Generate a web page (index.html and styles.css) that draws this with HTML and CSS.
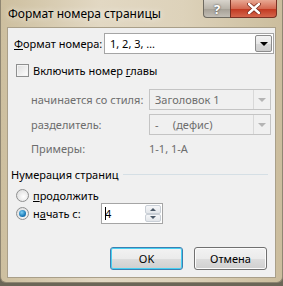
FILE: index.html
```html
<!DOCTYPE html>
<html>
    <head>
        <meta charset="UTF-8">
        <title>Формат номера страницы</title>
        <link rel="stylesheet" href="styles.css">
    </head>
    <body>
        <div class="window">
            <div class="titlebar">
                <span class="title">Формат номера страницы</span>
                <div class="caption-btns">
                    <div class="cap-btn help">?</div>
                    <div class="cap-btn close">
                        <svg width="14" height="11" viewBox="0 0 14 11">
                            <path d="M2 1 L12 10 M12 1 L2 10" stroke="#7a2a1c" stroke-width="4" stroke-linecap="round"/>
                            <path d="M2 1 L12 10 M12 1 L2 10" stroke="#ffffff" stroke-width="2.4" stroke-linecap="round"/>
                        </svg>
                    </div>
                </div>
            </div>
            <div class="client">
                <div class="row row-format">
                    <label class="lbl-format"><u>Ф</u>ормат номера:</label>
                    <div class="combo combo-format">
                        <span class="combo-text">1, 2, 3, …</span>
                        <span class="combo-btn"><span class="arrow"></span></span>
                    </div>
                </div>

                <div class="row row-check">
                    <span class="checkbox"></span>
                    <span>Включить номер <u>г</u>лавы</span>
                </div>

                <div class="row indent row-style">
                    <span class="lbl-indent disabled">начинается со стиля:</span>
                    <div class="combo combo-disabled">
                        <span class="combo-text">Заголовок 1</span>
                        <span class="combo-btn"><span class="arrow"></span></span>
                    </div>
                </div>

                <div class="row indent row-sep">
                    <span class="lbl-indent disabled">разделитель:</span>
                    <div class="combo combo-disabled">
                        <span class="combo-text">-&nbsp;&nbsp;&nbsp;&nbsp;&nbsp;(дефис)</span>
                        <span class="combo-btn"><span class="arrow"></span></span>
                    </div>
                </div>

                <div class="row indent row-examples">
                    <span class="lbl-indent disabled">Примеры:</span>
                    <span class="disabled examples">1-1, 1-A</span>
                </div>

                <div class="group-head">
                    <span>Нумерация страниц</span>
                    <span class="group-line"></span>
                </div>

                <div class="row row-radio1">
                    <span class="radio"></span>
                    <span><u>п</u>родолжить</span>
                </div>

                <div class="row row-radio2">
                    <span class="radio checked"></span>
                    <span class="lbl-start">н<u>а</u>чать с:</span>
                    <div class="spin">
                        <span class="spin-text"><span class="caret"></span>4</span>
                        <span class="spin-btns">
                            <span class="spin-btn"><span class="up"></span></span>
                            <span class="spin-btn"><span class="down"></span></span>
                        </span>
                    </div>
                </div>

                <div class="buttons">
                    <div class="btn btn-default">OK</div>
                    <div class="btn">Отмена</div>
                </div>
            </div>
        </div>
    </body>
</html>
```

FILE: styles.css
```css
body {
    margin: 0;
    padding: 0;
    background: #6b6657;
    font-family: "Noto Sans", "DejaVu Sans", sans-serif;
    font-size: 11px;
    color: #000000;
}

.window {
    width: 283px;
    height: 283px;
    background: linear-gradient(90deg, #cdbf9f 0%, #e2d8c3 35%, #ddd2ba 65%, #cbbd9d 100%);
    border-radius: 0 0 6px 6px;
    box-sizing: border-box;
    border: 1px solid #8f8672;
    border-top: none;
}

.titlebar {
    height: 27px;
    display: flex;
    justify-content: space-between;
    align-items: flex-start;
    padding-left: 7px;
}

.title {
    font-size: 12px;
    margin-top: 5px;
    color: #000000;
    text-shadow: 0 0 6px rgba(255, 255, 255, 0.9);
}

.caption-btns {
    display: flex;
    margin-right: 5px;
}

.cap-btn {
    height: 18px;
    box-sizing: border-box;
    border: 1px solid #6e6a60;
    border-top: none;
    display: flex;
    align-items: center;
    justify-content: center;
}

.help {
    width: 27px;
    border-radius: 0 0 0 4px;
    background: linear-gradient(#d8d4cc, #b9b4aa 50%, #a7a197 55%, #c2beb5);
    color: #ffffff;
    font-weight: bold;
    font-size: 13px;
    text-shadow: 0 0 2px #333;
    border-right: none;
}

.close {
    width: 47px;
    border-radius: 0 0 4px 0;
    background: linear-gradient(#e8a893, #d46a52 50%, #c23a22 55%, #d5664c);
    border-color: #7a3124;
}

.client {
    margin: 0 6px;
    height: 251px;
    background: #f0f0f0;
    border: 1px solid #a99f89;
    box-sizing: border-box;
    padding: 0 0 0 6px;
}

.row {
    display: flex;
    align-items: center;
    height: 21px;
}

.row-format {
    margin-top: 5px;
}

.lbl-format {
    width: 90px;
}

.combo {
    display: flex;
    align-items: center;
    justify-content: space-between;
    height: 21px;
    box-sizing: border-box;
    border: 1px solid #a5a5a5;
    background: #ffffff;
}

.combo-format {
    width: 170px;
}

.combo-text {
    padding-left: 5px;
}

.combo-btn {
    width: 17px;
    height: 17px;
    margin-right: 1px;
    box-sizing: border-box;
    border: 1px solid #8c8c8c;
    border-radius: 2px;
    background: linear-gradient(#f4f4f4, #e7e7e7 50%, #d7d7d7 51%, #cecece);
    display: flex;
    align-items: center;
    justify-content: center;
}

.arrow {
    width: 0;
    height: 0;
    border-left: 4px solid transparent;
    border-right: 4px solid transparent;
    border-top: 4px solid #000000;
}

.combo-disabled {
    width: 122px;
    background: #f0f0f0;
    border-color: #c4c4c4;
    color: #6d6d6d;
}

.combo-disabled .combo-btn {
    border: none;
    border-left: 1px solid #d8d8d8;
    background: #f0f0f0;
    border-radius: 0;
    height: 19px;
    margin-right: 0;
}

.combo-disabled .arrow {
    border-top-color: #b4b4b4;
}

.row-check {
    margin-top: 6px;
}

.checkbox {
    width: 13px;
    height: 13px;
    box-sizing: border-box;
    border: 1px solid #8e8f8f;
    background: linear-gradient(135deg, #dcdcdc, #ffffff);
    box-shadow: inset 0 0 0 1px #f4f4f4;
    margin: 0 4px 0 2px;
}

.indent {
    padding-left: 17px;
}

.lbl-indent {
    width: 118px;
}

.disabled {
    color: #6d6d6d;
}

.row-style {
    margin-top: 8px;
}

.row-sep {
    margin-top: 4px;
}

.row-examples {
    margin-top: 3px;
    height: 20px;
}

.group-head {
    display: flex;
    align-items: center;
    height: 16px;
    margin-top: 8px;
    margin-left: -3px;
}

.group-line {
    flex: 1;
    height: 0;
    border-top: 1px solid #d5dfe5;
    margin: 1px 7px 0 4px;
}

.row-radio1 {
    margin-top: 3px;
    height: 20px;
}

.radio {
    width: 13px;
    height: 13px;
    box-sizing: border-box;
    border: 1px solid #8e8f8f;
    border-radius: 50%;
    background: radial-gradient(circle at 60% 60%, #ffffff, #d6d6d6);
    margin: 0 4px 0 2px;
    position: relative;
}

.radio.checked::after {
    content: "";
    position: absolute;
    left: 2px;
    top: 2px;
    width: 7px;
    height: 7px;
    border-radius: 50%;
    background: radial-gradient(circle at 40% 35%, #7fd0f5, #1b7bb8 60%, #0e4f86);
}

.row-radio2 {
    margin-top: -2px;
}

.lbl-start {
    width: 68px;
}

.spin {
    width: 62px;
    height: 21px;
    box-sizing: border-box;
    border: 1px solid #a5a5a5;
    background: #ffffff;
    display: flex;
    justify-content: space-between;
}

.spin-text {
    display: flex;
    align-items: center;
    padding-left: 3px;
}

.caret {
    width: 1px;
    height: 13px;
    background: #000000;
    margin-right: -1px;
}

.spin-btns {
    display: flex;
    flex-direction: column;
    width: 16px;
    margin: 1px;
}

.spin-btn {
    flex: 1;
    box-sizing: border-box;
    border: 1px solid #c9cfd6;
    border-radius: 2px;
    background: linear-gradient(#f6f7f9, #e3e6ea);
    display: flex;
    align-items: center;
    justify-content: center;
}

.up {
    width: 0;
    height: 0;
    border-left: 3px solid transparent;
    border-right: 3px solid transparent;
    border-bottom: 3px solid #4d5a69;
}

.down {
    width: 0;
    height: 0;
    border-left: 3px solid transparent;
    border-right: 3px solid transparent;
    border-top: 3px solid #4d5a69;
}

.buttons {
    display: flex;
    justify-content: flex-end;
    gap: 11px;
    margin-top: 23px;
    margin-right: 8px;
}

.btn {
    width: 73px;
    height: 23px;
    box-sizing: border-box;
    border: 1px solid #707070;
    border-radius: 3px;
    background: linear-gradient(#f2f2f2, #ebebeb 50%, #dddddd 51%, #cfcfcf);
    box-shadow: inset 0 0 0 1px #fcfcfc;
    display: flex;
    align-items: center;
    justify-content: center;
}

.btn-default {
    border-color: #3c7fb1;
    box-shadow: inset 0 0 0 1px #48d0f2;
}
```
